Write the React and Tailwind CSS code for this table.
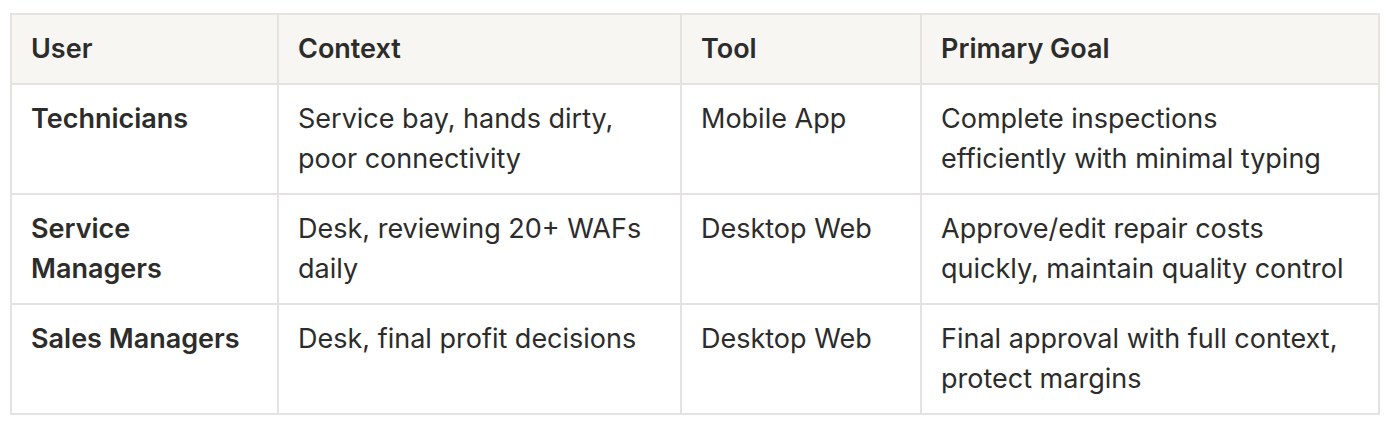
import React from "react";

const rows = [
  {
    user: "Technicians",
    context: ["Service bay, hands dirty,", "poor connectivity"],
    tool: "Mobile App",
    goal: ["Complete inspections", "efficiently with minimal typing"],
  },
  {
    user: ["Service", "Managers"],
    context: ["Desk, reviewing 20+ WAFs", "daily"],
    tool: "Desktop Web",
    goal: ["Approve/edit repair costs", "quickly, maintain quality control"],
  },
  {
    user: "Sales Managers",
    context: "Desk, final profit decisions",
    tool: "Desktop Web",
    goal: ["Final approval with full context,", "protect margins"],
  },
];

const Lines = ({ value }) =>
  Array.isArray(value)
    ? value.map((line, i) => <div key={i} className="whitespace-nowrap">{line}</div>)
    : <div className="whitespace-nowrap">{value}</div>;

const App = () => {
  return (
    <div className="w-[1390px] h-[424px] bg-white pt-[13px] pl-[10px] font-['Inter',sans-serif] text-[27px] leading-[40px] text-[#2c2c2b]">
      <table className="border-collapse table-fixed w-[1368px]">
        <colgroup>
          <col className="w-[267px]" />
          <col className="w-[403px]" />
          <col className="w-[240px]" />
          <col className="w-[458px]" />
        </colgroup>
        <thead>
          <tr className="bg-[#f7f6f3]">
            {["User", "Context", "Tool", "Primary Goal"].map((h) => (
              <th
                key={h}
                className="border-2 border-[#e4e3e1] px-[19px] py-[14px] text-left font-semibold align-top"
              >
                {h}
              </th>
            ))}
          </tr>
        </thead>
        <tbody>
          {rows.map((r, i) => (
            <tr key={i}>
              <td className="border-2 border-[#e4e3e1] px-[19px] py-[14px] align-top font-semibold">
                <Lines value={r.user} />
              </td>
              <td className="border-2 border-[#e4e3e1] px-[19px] py-[14px] align-top">
                <Lines value={r.context} />
              </td>
              <td className="border-2 border-[#e4e3e1] px-[19px] py-[14px] align-top">
                <Lines value={r.tool} />
              </td>
              <td className="border-2 border-[#e4e3e1] px-[19px] py-[14px] align-top">
                <Lines value={r.goal} />
              </td>
            </tr>
          ))}
        </tbody>
      </table>
    </div>
  );
};

export default App;
